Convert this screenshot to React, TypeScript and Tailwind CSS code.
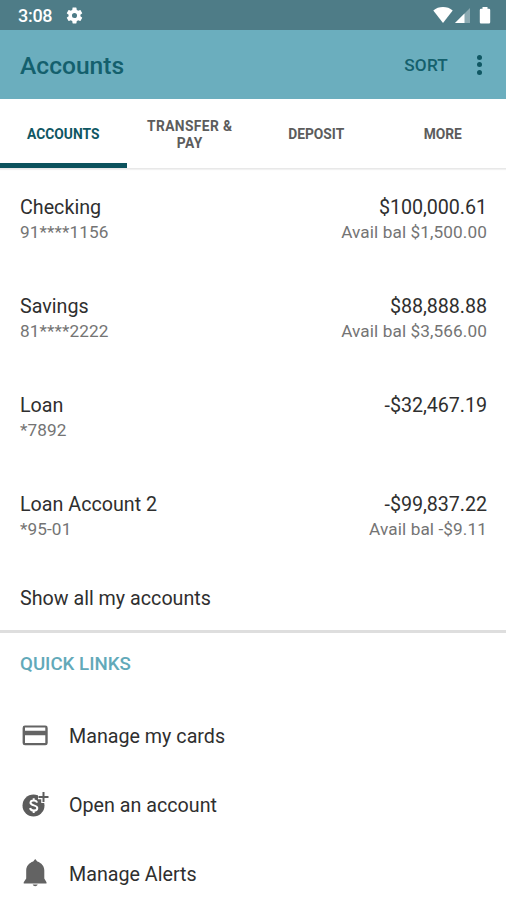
const accounts = [
  { name: "Checking", number: "91****1156", balance: "$100,000.61", available: "Avail bal $1,500.00" },
  { name: "Savings", number: "81****2222", balance: "$88,888.88", available: "Avail bal $3,566.00" },
  { name: "Loan", number: "*7892", balance: "-$32,467.19", available: "" },
  { name: "Loan Account 2", number: "*95-01", balance: "-$99,837.22", available: "Avail bal -$9.11" },
];

const CardIcon = () => (
  <svg width="30" height="30" viewBox="0 0 30 30" fill="#646464">
    <path
      fillRule="evenodd"
      d="M5 4.500h20.300a2.400 2.400 0 0 1 2.400 2.400v15a2.400 2.400 0 0 1-2.400 2.400H5a2.400 2.400 0 0 1-2.400-2.400V6.900A2.400 2.400 0 0 1 5 4.500zM5 6.600v3.100h20.300V6.600zM5 14.200v7.900h20.300v-7.900z"
    />
  </svg>
);

const OpenAccountIcon = () => (
  <svg width="30" height="30" viewBox="0 0 30 30">
    <circle cx="13.500" cy="15.500" r="11" fill="#5c5c5c" />
    <path d="M23.500 1v12M18 7h11" stroke="#fff" strokeWidth="4.500" />
    <path d="M23.500 2v10M18.500 7h10" stroke="#5c5c5c" strokeWidth="2" />
    <path
      d="M17 12.600c-.3-1.400-1.500-2.200-3.300-2.200-1.900 0-3.200.9-3.200 2.400 0 3.400 6.800 1.700 6.800 5.200 0 1.600-1.400 2.600-3.500 2.600-2 0-3.400-1-3.700-2.600M13.700 8.300v2.300M13.700 20.500v2.400"
      fill="none"
      stroke="#fff"
      strokeWidth="2"
    />
  </svg>
);

const BellIcon = () => (
  <svg width="30" height="30" viewBox="0 0 30 30" fill="#636363">
    <path d="M15.200 0 17.300 2.600C21.500 4 24.300 7.300 24.300 11.500V19.500L26.500 23.300V24.500H3.700V23.300L6.200 19.500V11.500C6.200 7.300 9 4 13.200 2.600z" />
    <path d="M12.700 25.500h5c-.5 1.200-1.300 1.700-2.500 1.700s-2-.5-2.500-1.700z" />
  </svg>
);

const links = [
  { label: "Manage my cards", icon: <CardIcon /> },
  { label: "Open an account", icon: <OpenAccountIcon /> },
  { label: "Manage Alerts", icon: <BellIcon /> },
];

const StatusBar = () => (
  <div className="flex h-[30px] items-center bg-[#4e7c87] pl-[18px] pr-[15px] text-white">
    <span className="text-[18px] font-medium leading-none tracking-[-0.3px] pt-0.5">3:08</span>
    <svg className="ml-[13px] mt-px" width="19" height="19" viewBox="0 0 24 24" fill="currentColor">
      <path d="M19.430 12.980c.04-.32.07-.64.07-.98s-.03-.66-.07-.98l2.110-1.650c.19-.15.24-.42.12-.64l-2-3.460c-.12-.22-.39-.3-.61-.22l-2.490 1c-.52-.4-1.080-.73-1.690-.98l-.38-2.650A.488.488 0 0 0 14 2h-4c-.25 0-.46.18-.49.42l-.38 2.650c-.61.25-1.170.59-1.690.98l-2.490-1c-.23-.09-.49 0-.61.22l-2 3.460c-.13.22-.07.49.12.64l2.110 1.650c-.04.32-.07.65-.07.98s.03.66.07.98l-2.110 1.650c-.19.15-.24.42-.12.64l2 3.460c.12.22.39.3.61.22l2.490-1c.52.4 1.080.73 1.690.98l.38 2.650c.03.24.24.42.49.42h4c.25 0 .46-.18.49-.42l.38-2.650c.61-.25 1.170-.59 1.690-.98l2.490 1c.23.09.49 0 .61-.22l2-3.460c.12-.22.07-.49-.12-.64l-2.110-1.650zM12 15.200a3.200 3.200 0 1 1 0-6.400 3.200 3.200 0 0 1 0 6.400z" />
    </svg>
    <div className="ml-auto flex items-center">
      <svg width="20" height="18" viewBox="0 0 20 18" fill="currentColor">
        <path d="M10 17 .3 4.400C3 2.200 6.300 1 10 1s7 1.200 9.700 3.400z" />
      </svg>
      <svg className="ml-0.5" width="16" height="18" viewBox="0 0 16 18" fill="currentColor">
        <path d="M0 17 15 2V17z" opacity="0.35" />
        <path d="M0 17 9.500 7.500V17z" />
      </svg>
      <svg className="ml-2" width="12" height="18" viewBox="0 0 12 18" fill="currentColor">
        <path d="M3.500 1h5v1.700h1.500a1.200 1.200 0 0 1 1.200 1.200v12.300a1.200 1.200 0 0 1-1.200 1.200H2a1.200 1.200 0 0 1-1.200-1.200V3.900A1.200 1.200 0 0 1 2 2.700h1.500z" />
      </svg>
    </div>
  </div>
);

const App = () => {
  return (
    <div className="h-[900px] w-full overflow-hidden bg-white font-['Roboto',sans-serif] text-[#2f2f2f]">
      <StatusBar />

      <header className="flex h-[69px] items-center bg-[#6baebe] pl-5 pr-6 text-[#14606d]">
        <h1 className="pt-[3px] text-[24.600px] font-medium">Accounts</h1>
        <span className="ml-auto pt-[3px] text-[17.200px] font-medium tracking-[0.2px]">SORT</span>
        <div className="ml-[29px] flex flex-col gap-[2.500px]">
          <div className="size-[5px] rounded-full bg-[#0f5763]"></div>
          <div className="size-[5px] rounded-full bg-[#0f5763]"></div>
          <div className="size-[5px] rounded-full bg-[#0f5763]"></div>
        </div>
      </header>

      {/* Tabs */}
      <nav className="grid h-[70px] grid-cols-4 border-b border-[#e8e8e8] text-center text-[13.800px] font-bold leading-[17px] text-[#5c5c5c] shadow-[0_1px_1px_#f1f1f1]">
        <div className="flex items-center justify-center border-b-[5px] border-[#0c525d] pt-1.5 text-[#0f5763]">
          ACCOUNTS
        </div>
        <div className="flex items-center justify-center px-4 pt-0.5 tracking-[0.400px]">TRANSFER & PAY</div>
        <div className="flex items-center justify-center pt-px">DEPOSIT</div>
        <div className="flex items-center justify-center pt-px">MORE</div>
      </nav>

      {/* Account list */}
      <div className="pt-[26px]">
        {accounts.map((account) => (
          <div key={account.name} className="flex h-[99px] justify-between pl-5 pr-[19px]">
            <div>
              <p className="text-[19.700px] leading-[25px]">{account.name}</p>
              <p className="text-[17.200px] leading-[24px] tracking-[0.1px] text-[#747474]">{account.number}</p>
            </div>
            <div className="text-right">
              <p className="text-[19.700px] leading-[25px] tracking-[-0.050px]">{account.balance}</p>
              <p className="text-[17.200px] leading-[24px] tracking-[0.1px] text-[#747474]">{account.available}</p>
            </div>
          </div>
        ))}
      </div>

      <p className="-mt-[5px] h-[47px] border-b-[3px] border-[#dedede] pl-5 text-[19.700px] leading-[25px]">
        Show all my accounts
      </p>

      {/* Quick links */}
      <h2 className="pl-5 pt-[19px] text-[18.700px] font-medium leading-[25px] text-[#62a9b9]">QUICK LINKS</h2>
      <ul className="pt-6">
        {links.map((link) => (
          <li key={link.label} className="flex h-[69px] items-center gap-[19px] pl-5">
            {link.icon}
            <span className="pt-px text-[19.700px] leading-[25px]">{link.label}</span>
          </li>
        ))}
      </ul>
    </div>
  );
};

export default App;
